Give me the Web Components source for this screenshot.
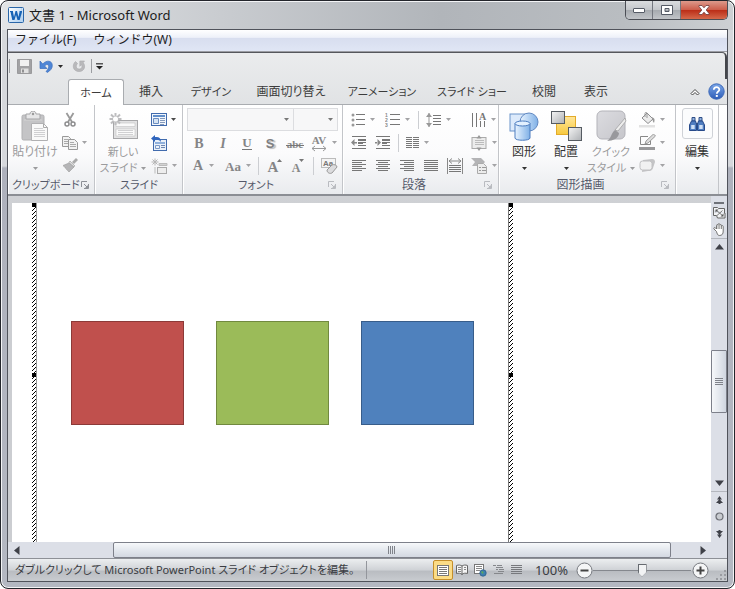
<!DOCTYPE html>
<html lang="ja">
<head>
<meta charset="utf-8">
<title>文書 1 - Microsoft Word</title>
<style>
html,body{margin:0;height:100%;background:#fff}
body{font:12px/16px "Noto Sans","Noto Sans CJK JP",sans-serif;font-feature-settings:"palt";color:#2b2b2b;overflow:hidden}
</style>
</head>
<body>
<app-window></app-window>
<script>
const RESET = `
:host,*{box-sizing:border-box}
button,select,input{font:inherit;color:inherit;font-feature-settings:inherit;margin:0;padding:0;border:0;background:none;border-radius:0}
button{display:flex;align-items:center;justify-content:center;white-space:nowrap}
svg{display:block;flex:none}
.kana{font-size:11px}
`;
function define(name, css, html) {
  const t = document.createElement('template');
  t.innerHTML = `<style>${RESET}${css}</style>${typeof html === 'string' ? html : ''}`;
  customElements.define(name, class extends HTMLElement {
    constructor() {
      super();
      this.attachShadow({ mode: 'open' }).append(t.content.cloneNode(true));
    }
    connectedCallback() {
      if (typeof html === 'function' && !this.ready) {
        this.ready = true;
        this.shadowRoot.innerHTML += html(this);
      }
    }
  });
}
const svg = (w, h, body) => `<svg width="${w}" height="${h}" viewBox="0 0 ${w} ${h}" fill="none" aria-hidden="true">${body}</svg>`;
const lines = (rows, color = '#777') => rows.map(([x, y, w]) => `<path d="M${x} ${y + .5}h${w}" stroke="${color}"/>`).join('');
const letter = (w, t, extra) => svg(w, 18, `<text x="${w / 2}" y="14" text-anchor="middle" font-family="Liberation Serif, serif" font-weight="bold" font-size="14" fill="#858587" ${extra || ''}>${t}</text>`);

const ICONS = {
  word: svg(16, 16, `<defs><linearGradient id="g" x1="0" y1="0" x2="1" y2="1"><stop stop-color="#fff"/><stop offset="1" stop-color="#a9cdf0"/></linearGradient></defs><rect x=".5" y=".5" width="15" height="15" rx="1" fill="url(#g)" stroke="#2a66a8"/><path d="M13.5 1v14" stroke="#bcd6ef"/><path d="M2 4h3v1l1 5 1.500-6h1.500l1.500 6 1-5V4h2.500v1l-2.300 8H9.500L8 8l-1.500 5H4.300L2.500 5H2z" fill="#1763b5"/>`),
  min: svg(12, 5, `<rect x=".5" y=".5" width="11" height="4" rx=".5" fill="#fff" stroke="#555b66"/>`),
  max: svg(12, 10, `<path d="M.5.5h11v9H.5zM4 3.500v3h4v-3z" fill="#fff" fill-rule="evenodd" stroke="#555b66"/>`),
  close: svg(12, 10, `<path d="M1 .5h3l2 2.300L8 .5h3v1L8.200 5 11 8.500v1H8L6 7.200 4 9.500H1v-1L3.800 5 1 1.500z" fill="#fff" stroke="#6b3a3a" stroke-width=".8"/>`),
  save: svg(15, 15, `<path d="M.5.5h14v14h-14z" fill="#a2a2a4" stroke="#9a9a9c"/><path d="M3 1h9v6H3z" fill="#f1f1f1"/><path d="M4 9.500h7.500V14H4z" fill="#e0e0e0"/><path d="M5 10.500h2v3H5z" fill="#909092"/>`),
  undo: svg(14, 14, `<path d="M1 2v7.500h7L5.600 7C7.600 4.600 9.700 5.400 9.700 7.500c0 2-1 3.300-2.700 4.900l1.400 1C11.500 11.500 13.300 9.500 13.300 6.500 13.300 1.500 7.500.6 3.800 5z" fill="#4f86d6" stroke="#3a6dbb" stroke-width=".7"/>`),
  redo: svg(14, 14, `<path d="M3.500 2.500C-.5 6 1 12.500 7 12.500c5.500 0 7-5.500 4.200-8.800L12.500 2H7.800v5.300L9.400 5.700c1.300 2.200.3 4.300-2.200 4.300C4.200 10 3.300 7 5.500 4.500z" fill="#b9b9bb" stroke="#aaaaac" stroke-width=".6"/>`),
  more: svg(7, 7, `<path d="M0 .8h7" stroke="#333" stroke-width="1.200"/><path d="M0 3h7L3.500 6.500z" fill="#222"/>`),
  caret: svg(5, 3, `<path d="M0 0h5L2.500 3z" fill="currentColor"/>`),
  chevron: svg(10, 8, `<path d="M1 5.500 5 1.500l4 4-1.500 1.500L5 4.500 2.500 7z" fill="#fff" stroke="#444" stroke-width="1"/>`),
  help: svg(17, 17, `<defs><linearGradient id="g" x1="0" y1="0" x2="0" y2="1"><stop stop-color="#7ba7e8"/><stop offset="1" stop-color="#2d5cb8"/></linearGradient></defs><circle cx="8.500" cy="8.500" r="7.700" fill="url(#g)" stroke="#3d69b8"/><path d="M5.800 6.800c0-3.600 5.700-3.400 5.500 0-.1 1.700-2.500 1.900-2.500 4" stroke="#fff" stroke-width="1.800"/><path d="M7.800 12h2v1.900h-2z" fill="#fff"/>`),
  launcher: svg(8, 8, `<path d="M.5 6V.5H6" stroke="currentColor"/><path d="M3 3l3 3M7.500 3v4.500H3" stroke="currentColor"/><path d="M7 4v3H4z" fill="currentColor"/>`),
  paste: svg(28, 31, `<rect x="1" y="4" width="22" height="25" rx="1.500" fill="#c4c4c6" stroke="#b0b0b2"/><path d="M3 9h18" stroke="#d4d4d4"/><path d="M5 3h4c0-4 6-4 6 0h4v5H5z" fill="#e6e6e7" stroke="#a5a5a7"/><circle cx="12" cy="3" r="1.200" fill="#999"/><path d="M10.500 12.500h12l4 4v13h-16z" fill="#f9f9f9" stroke="#b0b0b2"/><path d="M22.500 12.500v4h4" stroke="#aaa"/>${lines([[13, 17, 9], [13, 19, 11], [13, 21, 11], [13, 23, 11], [13, 25, 11]], '#cfcfd1')}`),
  cut: svg(12, 16, `<path d="M2.500 1 8 10M9.500 1 4 10" stroke="#999" stroke-width="1.800"/><circle cx="3" cy="12" r="2" stroke="#8c8c8e" stroke-width="1.500"/><circle cx="9" cy="12" r="2" stroke="#8c8c8e" stroke-width="1.500"/>`),
  copy: svg(16, 14, `<path d="M.5.500h6l2 2v8h-8z" fill="#f2f2f2" stroke="#999"/>${lines([[2, 3, 4], [2, 5, 4], [2, 7, 4]], '#aaa')}<path d="M6.500 3.500h6l3 3v7h-9z" fill="#f2f2f2" stroke="#999"/>${lines([[8, 6, 4], [8, 8, 6], [8, 10, 6]], '#aaa')}`),
  brush: svg(16, 15, `<path d="m14 0 2 2-4 4-2-2z" fill="#aaa"/><path d="m8 3 5 5-1.500 1L7 4.500z" fill="#ddd" stroke="#999" stroke-width=".6"/><path d="M7 5 1 7.500c1.500 1 1.500 2 3 3 .5 1.500 2 2 3 3.500L12 9z" fill="#b5b5b7" stroke="#999" stroke-width=".6"/>`),
  newslide: svg(31, 29, `<rect x="5.500" y="8.500" width="24" height="18" fill="#e2e2e3" stroke="#a6a6a8"/><path d="M8 11h19v3.500H8zM8 17h19v7H8z" fill="#fafafa" stroke="#c3c3c5" stroke-width=".6"/>${lines([[10, 18, 15], [10, 20, 15], [10, 22, 15]], '#d0d0d2')}<path d="M7.500 1v12M1.500 7h12M3 2.500l9 9M12 2.500l-9 9" stroke="#bdbdbf" stroke-width="2"/><circle cx="7.500" cy="7" r="2.500" fill="#fff"/>`),
  layout: svg(16, 13, `<rect x=".5" y=".5" width="15" height="12" fill="#f3f7fc" stroke="#416bad"/><path d="M2 2h12v2H2z" fill="#6390cb"/><path d="M2.500 5.500h5v5h-5z" fill="#d7e4f3" stroke="#6a8cc0"/>${lines([[9, 5, 5], [9, 7, 5], [9, 9, 5], [9, 11, 4]], '#8399bb')}`),
  reset: svg(17, 16, `<rect x="2.500" y="4.500" width="13" height="11" fill="#eaf1f9" stroke="#416bad"/><path d="M4 7h10v2H4z" fill="#8fb0dc"/><path d="M4.500 10.500h4v3h-4z" stroke="#7a98c6"/>${lines([[10, 10, 4], [10, 12, 4]], '#6e87b1')}<path d="M0 3.500 4 0v2c4-.5 6 1 6 5C8.500 5 7 4.500 4 5v2z" fill="#2f65bd"/>`),
  section: svg(17, 16, `<path d="M4 .5v7M.5 4h7M1.500 1.500l5 5M6.500 1.500l-5 5" stroke="#b5b5b5"/><path d="M8 5.500h8v2H8z" fill="#d2d2d2" stroke="#bbb"/><rect x="6.500" y="9.500" width="9" height="6" fill="#ededed" stroke="#aaa"/><path d="M4 9v6.500" stroke="#bbb"/>`),
  bold: letter(14, 'B'),
  italic: letter(14, 'I', 'font-style="italic"'),
  underline: svg(14, 18, `<text x="7" y="13" text-anchor="middle" font-family="Liberation Serif, serif" font-weight="bold" font-size="13" fill="#858587">U</text><path d="M2 15.500h10" stroke="#777"/>`),
  shadow: svg(16, 18, `<text x="7" y="14" text-anchor="middle" font-family="Liberation Sans, sans-serif" font-weight="bold" font-size="13" fill="#808082" style="text-shadow:2px 1px 1px #bbb">S</text>`),
  strike: svg(18, 18, `<text x="9" y="14" text-anchor="middle" font-family="Liberation Serif, serif" font-weight="bold" font-size="11" fill="#888">abc</text><path d="M0 11.500h18" stroke="#777"/>`),
  spacing: svg(17, 18, `<text x="8" y="10" text-anchor="middle" font-family="Liberation Serif, serif" font-weight="bold" font-size="11" fill="#888">AV</text><path d="M1 14.500h14M4 12l-3 2.500L4 17M12 12l3 2.500L12 17" stroke="#999"/>`),
  fontcolor: letter(14, 'A', 'dy="-1"'),
  case: svg(17, 18, `<text x="8" y="14" text-anchor="middle" font-family="Liberation Serif, serif" font-weight="bold" font-size="13" fill="#858587">Aa</text>`),
  grow: svg(16, 18, `<text x="7" y="15" text-anchor="middle" font-family="Liberation Serif, serif" font-weight="bold" font-size="15" fill="#858587">A</text><path d="M11 5h5l-2.500-3z" fill="#777"/>`),
  shrink: svg(14, 18, `<text x="5" y="15" text-anchor="middle" font-family="Liberation Serif, serif" font-weight="bold" font-size="12" fill="#888">A</text><path d="M8 2h5l-2.500 3z" fill="#777"/>`),
  clear: svg(17, 17, `<rect x=".5" y="1.500" width="14" height="9" fill="#f4f4f4" stroke="#bbb"/><text x="7" y="9" text-anchor="middle" font-family="Liberation Sans, sans-serif" font-weight="bold" font-size="8" fill="#777">Aa</text><path d="m6 13 5-5c2-1 5 0 5 2l-5 6c-2 1-5 0-5-3z" fill="#dcdcde" stroke="#999"/>`),
  bullets: svg(15, 14, `<g fill="#999"><circle cx="2" cy="2" r="1.500"/><circle cx="2" cy="7" r="1.500"/><circle cx="2" cy="12" r="1.500"/></g>${lines([[5, 1, 9], [5, 6, 9], [5, 11, 9]])}`),
  numbers: svg(16, 15, `<g font-family="Liberation Sans, sans-serif" font-weight="bold" font-size="5" fill="#888"><text y="5">1</text><text y="10">2</text><text y="15">3</text></g>${lines([[5, 2, 10], [5, 7, 10], [5, 12, 10]])}`),
  linespace: svg(16, 16, `<path d="M3 1v14" stroke="#999"/><path d="M0 5 3 1l3 4zM0 11l3 4 3-4z" fill="#999"/>${lines([[7, 3, 8], [7, 6, 8], [7, 9, 8], [7, 12, 8]])}`),
  textdir: svg(16, 16, `<path d="M1.500 1v14M5.500 1v14M9.500 9v6M13.500 9v6" stroke="#777"/><text x="11.500" y="8" text-anchor="middle" font-family="Liberation Serif, serif" font-weight="bold" font-size="10" fill="#777">A</text>`),
  outdent: svg(16, 14, `${lines([[1, 0, 14], [7, 3, 8], [7, 4, 8], [7, 6, 8], [7, 7, 5], [7, 9, 8], [1, 12, 14]])}<path d="M0 6.500 3.500 3v7zM3 6h3v1.500H3z" fill="#888"/>`),
  indent: svg(16, 14, `${lines([[1, 0, 14], [7, 3, 8], [7, 4, 8], [7, 6, 8], [7, 7, 5], [7, 9, 8], [1, 12, 14]])}<path d="M6 6.500 2.500 3v7zM0 6h3v1.500H0z" fill="#888"/>`),
  columns: svg(14, 11, lines([0, 2, 4, 6, 8, 10].flatMap(y => [[0, y, 6], [7, y, 6]]))),
  aligntext: svg(17, 16, `<rect x="1" y="2.500" width="14" height="11" fill="#ececec" stroke="#aaa"/>${lines([[4, 5, 9], [4, 7, 9], [4, 9, 9]], '#bbb')}<path d="M8 0 5.500 3.500h5zM8 16l-2.500-3.500h5z" fill="#999"/>`),
  left: svg(15, 12, lines([[0, 0, 14], [0, 2, 10], [0, 4, 14], [0, 6, 10], [0, 8, 14], [0, 10, 10]])),
  center: svg(15, 12, lines([[0, 0, 14], [2, 2, 10], [0, 4, 14], [2, 6, 10], [0, 8, 14], [2, 10, 10]])),
  right: svg(15, 12, lines([[0, 0, 14], [4, 2, 10], [0, 4, 14], [4, 6, 10], [0, 8, 14], [4, 10, 10]])),
  justify: svg(15, 12, lines([[0, 0, 14], [0, 2, 14], [0, 4, 14], [0, 6, 14], [0, 8, 14], [0, 10, 14]])),
  distribute: svg(16, 16, `<path d="M.5 0v16M15.500 0v16M2 3h12M5 .5 2 3l3 2.500M11 .5 14 3l-3 2.500" stroke="#888"/>${lines([[2, 7, 12], [2, 9, 12], [2, 11, 12], [2, 13, 12]])}`),
  smartart: svg(17, 17, `<path d="M0 1h10l4 4-4 4H1l3-4z" fill="#b3b3b5"/><path d="M6.500 6.500h6l3 3v7h-9z" fill="#ececec" stroke="#aaa"/>${lines([[8, 10, 2], [11, 10, 4], [8, 13, 2], [11, 13, 4]], '#999')}`),
  shapes: svg(30, 29, `<defs><linearGradient id="g"><stop stop-color="#e9f4ff"/><stop offset="1" stop-color="#7fb0e6"/></linearGradient></defs><rect x="1" y="2" width="18" height="17" fill="#dceafb" stroke="#6b93c9"/><circle cx="20" cy="10" r="9" fill="url(#g)" stroke="#6289c2"/><path d="M6 11.500V26c0 3 15 3 15 0V11.500" fill="url(#g)" stroke="#4c7cbf"/><ellipse cx="13.500" cy="11.500" rx="7.500" ry="2.500" fill="#e2f0ff" stroke="#4c7cbf"/>`),
  arrange: svg(31, 30, `<defs><linearGradient id="g" x1="0" y1="0" x2="1" y2="1"><stop stop-color="#f5f5f5"/><stop offset="1" stop-color="#adb0b4"/></linearGradient><linearGradient id="y" x1="0" y1="0" x2="0" y2="1"><stop stop-color="#ffe69a"/><stop offset="1" stop-color="#f7c93f"/></linearGradient></defs><rect x="5.500" y="5.500" width="19" height="18" fill="url(#y)" stroke="#e3ab2a"/><rect x=".5" y=".5" width="13" height="12" fill="url(#g)" stroke="#555b62"/><rect x="17.500" y="16.500" width="13" height="13" fill="url(#g)" stroke="#555b62"/>`),
  styles: svg(31, 32, `<defs><linearGradient id="g" x1="0" y1="0" x2="1" y2="1"><stop stop-color="#dcdce0"/><stop offset="1" stop-color="#c6c6cb"/></linearGradient></defs><rect x="1" y="1" width="28" height="28" rx="5" fill="url(#g)" stroke="#b3b3b9"/><path d="m30 11-8 10-3-1L29 8z" fill="#ededed" stroke="#999" stroke-width=".7"/><path d="m19 20 4 3c0 5-6 8-12 8 4-2 4-8 8-11z" fill="#98989c"/>`),
  fill: svg(17, 16, `<path d="m3 6 5-5 6 6-5 4.500z" fill="#ececec" stroke="#8c8c8e"/><path d="M6 5V1.500C6 0 8 0 8 1.500V6" stroke="#999"/><path d="M12.500 5C16 6 16 8 15 11c-2-2-1-4-2.500-6z" fill="#999"/><path d="M0 13h16v2.500H0z" fill="#e2e2e2"/>`),
  outline: svg(17, 17, `<path d="M9 2.500H1.500v8h10V7" stroke="#888"/><path d="m14.500 0 2 2L9 9l-3 1 1-3z" fill="#ddd" stroke="#888" stroke-width=".8"/><path d="M0 13h16v3H0z" fill="#99999b"/>`),
  effects: svg(17, 14, `<path d="m4 1 9-1c2 0 3 1 3 3l-2 6c-1 3-3 3-5 3L3 13z" fill="#c4c4c6"/><rect x="1" y="2" width="12" height="9" rx="2.500" fill="#f1f1f1" stroke="#c0c0c2"/>`),
  find: svg(16, 14, `<path d="M3 .5h3V4H3zM10 .5h3V4h-3z" fill="#8fb0de" stroke="#2f4f87"/><path d="M2.500 4h4l1 3v6.500H.500V8zM9.500 4h4l2 4v5.500h-7V7z" fill="#4f7dc0" stroke="#274a8a"/><path d="M2.200 8h3.500v4H2.200zM10.200 8h3.500v4h-3.500z" fill="#cfe0f6"/><path d="M7 6h2v3H7z" fill="#2f4f87"/>`),
  up: svg(9, 6, `<path d="M0 5.500h9L4.500 0z" fill="#3f4148"/>`),
  down: svg(9, 6, `<path d="M0 .5h9L4.500 6z" fill="#3f4148"/>`),
  prev: svg(6, 9, `<path d="M5.500 0v9L0 4.500z" fill="#3f4148"/>`),
  next: svg(6, 9, `<path d="M.5 0v9L6 4.500z" fill="#3f4148"/>`),
  fit: svg(13, 12, `<path d="M.5 5.500v-5h4l1 1h6v5M.5 3v5.500h3l1 2.500h7.500V6" fill="#f2f3f5" stroke="#666"/><path d="m3 3 7 6M9.500 3.500 4 8.500" stroke="#777"/><path d="M2.500 2.500h3l-3 3zM10.500 9.500h-3l3-3z" fill="#555"/>`),
  hand: svg(13, 13, `<path d="M3.500 8.500 1 6c-.8-1 .6-2 1.400-1.200L3.500 6V2.500c0-1.200 1.600-1.200 1.600 0v-1c0-1.200 1.700-1.200 1.700 0v1c0-1.200 1.700-1.200 1.700 0v1c0-1.200 1.700-1.200 1.700 0V8c0 3-1 4.500-4 4.500-1.500 0-2.200-2-2.700-4z" fill="#fff" stroke="#666" stroke-width=".9"/><path d="M5.100 3v3M6.800 3v3M8.500 3.500V6" stroke="#777" stroke-width=".8"/>`),
  pageup: svg(7, 8, `<path d="M1 3.500h5L3.500 0zM0 7h7L3.500 3z" fill="#3f4148"/><path d="M2.500 6h2v2h-2z" fill="#3f4148"/>`),
  pagedown: svg(7, 8, `<path d="M1 4.500h5L3.500 8zM0 1h7L3.500 5z" fill="#3f4148"/><path d="M2.500 0h2v2h-2z" fill="#3f4148"/>`),
  ball: svg(9, 9, `<circle cx="4.500" cy="4.500" r="3.500" fill="#c8cbd0" stroke="#6d6f76" stroke-width="1.200"/>`),
  vgrip: svg(8, 8, lines([[0, 0, 8], [0, 2, 8], [0, 4, 8], [0, 6, 8]], '#80838a')),
  hgrip: svg(8, 8, `<path d="M.5 0v8M2.500 0v8M4.500 0v8M6.500 0v8" stroke="#80838a"/>`),
  print: svg(12, 11, `<rect x=".5" y=".5" width="11" height="10" fill="#fff" stroke="#777"/>${lines([[2, 2, 8], [2, 4, 8], [2, 6, 8], [2, 8, 8]], '#777')}`),
  read: svg(12, 12, `<path d="M.5 1.500c2-.8 4-.5 5.500.5 1.500-1 3.500-1.300 5.500-.5v8c-2-.6-4-.4-5.500.8C4.500 9.100 2.500 8.900.500 9.500zM6 2v9" fill="#f5f5f5" stroke="#666"/>${lines([[2, 3, 3], [2, 5, 3], [2, 7, 3], [8, 3, 2], [8, 5, 2]], '#888')}`),
  web: svg(13, 13, `<rect x=".5" y=".5" width="9" height="9" fill="#fff" stroke="#777"/>${lines([[2, 2, 6], [2, 4, 6], [2, 6, 4]], '#888')}<circle cx="9" cy="9" r="3.200" fill="#3e7fae" stroke="#2d5f8c" stroke-width=".8"/><path d="M7 8c2-2 3 0 2 2z" fill="#5fae56"/>`),
  outlineview: svg(11, 10, lines([[0, 0, 3], [4, 0, 5], [3, 2, 7], [3, 4, 2], [6, 4, 5], [5, 6, 6], [1, 8, 9]], '#85878b')),
  draft: svg(11, 10, lines([[0, 0, 11], [0, 2, 11], [0, 4, 11], [0, 6, 11], [0, 8, 11]], '#77797d')),
  minus: svg(17, 17, `<circle cx="8.500" cy="8.500" r="7.500" fill="#f4f5f6" stroke="#777a80"/><path d="M4.500 8.500h8" stroke="#444" stroke-width="2"/>`),
  plus: svg(17, 17, `<circle cx="8.500" cy="8.500" r="7.500" fill="#f4f5f6" stroke="#777a80"/><path d="M4.500 8.500h8M8.500 4.500v8" stroke="#444" stroke-width="2"/>`),
  corner: svg(12, 12, `<g fill="#9a9ca1"><path d="M9 1h2v2H9zM5 5h2v2H5zM9 5h2v2H9zM1 9h2v2H1zM5 9h2v2H5zM9 9h2v2H9z"/></g>`)
};

define('ui-icon', `:host{display:block;flex:none}`, el => ICONS[el.getAttribute('name')]);

define('tool-button', `
:host{display:block;flex:none;width:24px;height:23px;color:#a3a3a5}
:host([wide]){width:34px}
:host([enabled]){color:#4a4a4a}
button{width:100%;height:100%;gap:4px}
:host([wide]) button{justify-content:flex-start;padding-left:4px}
`, el => `<button aria-label="${el.getAttribute('label')}"><ui-icon name="${el.getAttribute('icon')}"></ui-icon>${el.hasAttribute('wide') ? '<ui-icon name="caret"></ui-icon>' : ''}</button>`);

define('big-button', `
:host{display:block;flex:none;width:44px;color:#9b9b9d}
:host([enabled]){color:#333}
button{width:100%;flex-direction:column;justify-content:flex-start}
.pic{height:36px;display:flex;align-items:center}
:host([boxed]) .pic{height:31px;width:31px;justify-content:center;margin:0 0 5px;border:1px solid #cfd2d7;border-radius:3px;background:#fbfcfd}
.last{display:flex;align-items:center;justify-content:center;gap:4px;min-height:16px}
span{line-height:16px}
`, el => `<button><div class="pic"><ui-icon name="${el.getAttribute('icon')}"></ui-icon></div><span><slot></slot></span><div class="last"><slot name="second"></slot><ui-icon name="caret"></ui-icon></div></button>`);

define('ribbon-group', `
:host{display:grid;grid-template-rows:minmax(0,1fr) 18px;grid-template-columns:minmax(0,1fr);flex:none;border-right:1px solid #c3c5c9;box-shadow:inset 1px 0 #fff;padding:3px 3px 0 4px}
.body{display:flex}
.cap{display:flex;align-items:center;color:#55596a;line-height:16px;white-space:nowrap}
.cap span{flex:1;text-align:center}
.cap button{width:14px;height:14px;color:#8d9096}
:host([dim]) .cap button{color:#b9bbc0}
`, el => `<div class="body"><slot></slot></div><div class="cap"><span class="${el.hasAttribute('kana') ? 'kana' : ''}">${el.getAttribute('caption') || ''}</span>${el.hasAttribute('launch') ? '<button aria-label="詳細設定"><ui-icon name="launcher"></ui-icon></button>' : ''}</div>`);

define('title-bar', `
:host{display:flex;align-items:center;height:28px;padding:0 6px 0 1px;color:#1c1c1c}
h1{font:inherit;font-size:13px;margin:0 0 0 5px;flex:1}
.ctl{display:flex;align-self:flex-start;height:19px;border:1px solid #4b4e55;border-top:0;border-radius:0 0 5px 5px;overflow:hidden}
.ctl button{width:28px;border-right:1px solid #74777f;background:linear-gradient(#dadcdf,#c3c6ca 50%,#a6aaaf 50%,#c1c4c8)}
.ctl button:first-child{width:27px}
.ctl button:last-child{width:46px;border:0;background:linear-gradient(#dd9a8c,#cc5c49 50%,#ba2c16 50%,#d5694b)}
.ctl{margin-right:-6px}
`, `<ui-icon name="word"></ui-icon><h1>文書 1 - Microsoft Word</h1>
<div class="ctl"><button aria-label="最小化"><ui-icon name="min"></ui-icon></button><button aria-label="最大化"><ui-icon name="max"></ui-icon></button><button aria-label="閉じる"><ui-icon name="close"></ui-icon></button></div>`);

define('menu-bar', `
:host{display:flex;height:22px;padding:0 7px;gap:17px;color:#1d1d1d;font-feature-settings:normal;background:linear-gradient(#fff,#eef1f9 35%,#d8deef 40%,#e0e6f5);border-bottom:1px solid #9b9da3}
button{height:20px}
`, `<button>ファイル(F)</button><button>ウィンドウ(W)</button>`);

define('quick-bar', `
:host{display:flex;align-items:center;height:27px;padding:0 1px;border-top:1px solid #55575c;border-right:2px solid #44464b;border-radius:0 5px 0 0}
i{width:1px;height:14px;background:#9b9da1}
button{height:20px}
.save{width:28px}.undo{width:15px}.drop{width:14px}.redo{width:24px}.more{width:14px}
`, `<i></i><button class="save" aria-label="上書き保存"><ui-icon name="save"></ui-icon></button><button class="undo" aria-label="元に戻す"><ui-icon name="undo"></ui-icon></button><button class="drop" aria-label="元に戻す一覧"><ui-icon name="caret"></ui-icon></button><button class="redo" aria-label="やり直し"><ui-icon name="redo"></ui-icon></button><i></i><button class="more" aria-label="カスタマイズ"><ui-icon name="more"></ui-icon></button>`);

define('tab-strip', `
:host{display:flex;align-items:flex-end;height:26px;padding-left:60px;border-bottom:1px solid #a9acb0;color:#3c3c3c}
nav{display:grid;grid-template-columns:56px 54px 66px 94px 88px 92px 52px 52px;flex:1}
button{height:25px}
.on{height:26px;margin-bottom:-1px;background:#fff;border:1px solid #a9acb0;border-bottom:0;border-radius:3px 3px 0 0}
.fold{width:20px}.help{width:22px}
`, `<nav><button class="on kana">ホーム</button><button>挿入</button><button class="kana">デザイン</button><button>画面切り替え</button><button class="kana">アニメーション</button><button class="kana">スライド ショー</button><button>校閲</button><button>表示</button></nav><button class="fold" aria-label="リボンの最小化"><ui-icon name="chevron"></ui-icon></button><button class="help" aria-label="ヘルプ"><ui-icon name="help"></ui-icon></button>`);

const tb = (icon, label, attrs = '') => `<tool-button icon="${icon}" label="${label}" ${attrs}></tool-button>`;
define('ribbon-bar', `
:host{display:flex;height:91px;background:linear-gradient(#fff,#fbfbfc 55%,#e9ebee);border-bottom:2px solid #8b8e94}
.col{display:flex;flex-direction:column}
.rows{display:flex;flex-direction:column;flex:1}
.row{display:flex;align-items:center;height:23px}
.push{margin-left:auto;margin-right:-2px}
i{width:1px;height:18px;margin:0 3px;background:#ccced2}
select{appearance:none;height:23px;border:1px solid #dcdde0;background:#f7f7f8}
.combo{display:grid;align-items:center;color:#777}
.combo>*{grid-area:1/1}
.combo ui-icon{justify-self:end;margin-right:5px;pointer-events:none}
.name{width:107px}.size{width:44px}.size select{border-left:0}
.clip{width:87px}.slide{width:88px}.font{width:160px}.para{width:156px}.draw{width:177px}.edit{width:43px}
.edit{padding-left:0;padding-right:0}
.s42{width:42px}.s46{width:46px}.s48{width:48px}
`, `
<ribbon-group class="clip" caption="クリップボード" kana launch>
<big-button icon="paste" class="s46">貼り付け</big-button>
<div class="col">${tb('cut', '切り取り')}${tb('copy', 'コピー', 'wide')}${tb('brush', '書式のコピー')}</div></ribbon-group>
<ribbon-group class="slide" caption="スライド" kana>
<big-button icon="newslide" class="s48 kana">新しい<span slot="second">スライド</span></big-button>
<div class="col">${tb('layout', 'レイアウト', 'wide enabled')}${tb('reset', 'リセット')}${tb('section', 'セクション', 'wide')}</div></ribbon-group>
<ribbon-group class="font" caption="フォント" kana launch dim><div class="rows">
<div class="row"><div class="combo name"><select aria-label="フォント名"><option></option></select><ui-icon name="caret"></ui-icon></div><div class="combo size"><select aria-label="サイズ"><option></option></select><ui-icon name="caret"></ui-icon></div></div>
<div class="row">${tb('bold', '太字')}${tb('italic', '斜体')}${tb('underline', '下線')}${tb('shadow', '影')}${tb('strike', '取り消し線')}${tb('spacing', '文字の間隔', 'wide')}</div>
<div class="row">${tb('fontcolor', 'フォントの色', 'wide')}${tb('case', '文字種の変換', 'wide')}<i></i>${tb('grow', '拡大')}${tb('shrink', '縮小')}<i></i>${tb('clear', '書式のクリア')}</div></div></ribbon-group>
<ribbon-group class="para" caption="段落" launch dim><div class="rows">
<div class="row">${tb('bullets', '箇条書き', 'wide')}${tb('numbers', '段落番号', 'wide')}<i></i>${tb('linespace', '行間', 'wide')}${tb('textdir', '文字列の方向', 'wide class="push"')}</div>
<div class="row">${tb('outdent', 'インデント解除')}${tb('indent', 'インデント')}<i></i>${tb('columns', '段組み', 'wide')}${tb('aligntext', '文字の配置', 'wide class="push"')}</div>
<div class="row">${tb('left', '左揃え')}${tb('center', '中央揃え')}${tb('right', '右揃え')}${tb('justify', '両端揃え')}${tb('distribute', '均等割り付け')}${tb('smartart', 'SmartArt に変換', 'wide class="push"')}</div></div></ribbon-group>
<ribbon-group class="draw" caption="図形描画" launch dim>
<big-button icon="shapes" class="s42" enabled>図形</big-button><big-button icon="arrange" class="s42" enabled>配置</big-button><big-button icon="styles" class="s48 kana">クイック<span slot="second">スタイル</span></big-button>
<div class="col">${tb('fill', '塗りつぶし', 'wide')}${tb('outline', '枠線', 'wide')}${tb('effects', '効果', 'wide')}</div></ribbon-group>
<ribbon-group class="edit"><big-button icon="find" class="s42" enabled boxed>編集</big-button></ribbon-group>`);

define('shape-box', `:host{display:block;width:113px;height:104px;background:var(--fill);border:1px solid var(--line)}`, '');

define('hatch-edge', `:host{display:block;position:relative}svg{width:100%;height:100%}
b{position:absolute;left:0;top:0;width:4px;height:4px;background:#000}b+b{top:50%}`,
`<svg aria-hidden="true" shape-rendering="crispEdges"><defs><pattern id="h" width="4" height="4" patternUnits="userSpaceOnUse"><path d="M0 0h4v4H0z" fill="#fff"/><path d="M3 0h1v1H3zM2 1h1v1H2zM1 2h1v1H1zM0 3h1v1H0z" fill="#000"/></pattern></defs><rect width="100%" height="100%" fill="url(#h)"/></svg><b></b><b></b>`);

define('slide-object', `
:host{display:flex;justify-content:space-between;width:481px;margin-left:20px}
.shapes{display:flex;align-items:center;gap:32px}
hatch-edge{width:5px}
.l{border-right:1px solid #999}
.r{border-left:1px solid #777}
`, `<hatch-edge class="l"></hatch-edge><div class="shapes"><slot></slot></div><hatch-edge class="r"></hatch-edge>`);

define('vertical-scroll', `
:host{display:flex;flex-direction:column;width:16px;background:#dcdfe7}
button{width:100%;height:17px;flex:none}
.split{height:8px;width:10px;align-self:center;border-bottom:2px solid #6f7279}
.line{border-top:1px solid #b4b7be}
.track{display:grid;grid-template-rows:94fr 63fr 60fr;flex:1}
.thumb{grid-row:2;display:flex;align-items:center;justify-content:center;border:1px solid #7d808a;border-radius:1px;background:linear-gradient(90deg,#f6f8fa,#e4e8ee 50%,#cfd5df)}
.foot{height:16px}
`, `<div class="split"></div><button aria-label="ウィンドウに合わせる"><ui-icon name="fit"></ui-icon></button><button aria-label="手のひら"><ui-icon name="hand"></ui-icon></button><button class="line" aria-label="上へ"><ui-icon name="up"></ui-icon></button><div class="track"><div class="thumb"><ui-icon name="vgrip"></ui-icon></div></div><button aria-label="下へ"><ui-icon name="down"></ui-icon></button><button class="line" aria-label="前のページ"><ui-icon name="pageup"></ui-icon></button><button aria-label="対象の選択"><ui-icon name="ball"></ui-icon></button><button aria-label="次のページ"><ui-icon name="pagedown"></ui-icon></button><div class="foot"></div>`);

define('horizontal-scroll', `
:host{display:flex;height:16px;background:#dcdfe7}
button{width:17px}
.track{display:grid;grid-template-columns:88fr 558fr 23fr;flex:1}
.thumb{grid-column:2;display:flex;align-items:center;justify-content:center;border:1px solid #7d808a;border-radius:2px;background:linear-gradient(#f6f8fa,#e4e8ee 50%,#d3d8e1)}
`, `<button aria-label="左へ"><ui-icon name="prev"></ui-icon></button><div class="track"><div class="thumb"><ui-icon name="hgrip"></ui-icon></div></div><button aria-label="右へ"><ui-icon name="next"></ui-icon></button>`);

define('document-area', `
:host{display:grid;grid-template-columns:1fr 16px;flex:1;min-height:0}
.left{display:grid;grid-template-rows:1fr 16px;min-width:0}
.page{display:flex;margin:7px 0 0 4px;background:#fff;overflow:hidden}
`, `<div class="left"><div class="page"><slide-object>
<shape-box style="--fill:#c0504d;--line:#8c3a38"></shape-box><shape-box style="--fill:#9bbb59;--line:#71893f"></shape-box><shape-box style="--fill:#4f81bd;--line:#385d8a"></shape-box></slide-object></div><horizontal-scroll></horizontal-scroll></div><vertical-scroll></vertical-scroll>`);

define('status-bar', `
:host{display:flex;align-items:center;height:23px;border-top:1px solid #8d9096;padding-left:7px;color:#3a3c42;background:linear-gradient(#eceef0,#cfd2d6 50%,#b9bcc1 55%,#c9ccd0)}
p{margin:0;width:351px;white-space:nowrap;font-size:11px}
i{width:1px;height:18px;background:#93969c}
.views{display:flex;margin-left:auto}
.views button{width:18px;height:20px}
.views .on{width:20px;background:#fbdc86;border:1px solid #c58f2b;border-radius:2px}
.pct{width:43px;justify-content:flex-end;margin-right:7px;font-size:13px}
.out{width:18px}
input{appearance:none;width:98px;height:17px;background:linear-gradient(#85888e,#85888e) center/100% 1px no-repeat}
input::-webkit-slider-thumb{appearance:none;width:9px;height:13px;background:#6b6e75;clip-path:polygon(0 0,100% 0,100% 65%,50% 100%,0 65%);box-shadow:inset 0 0 0 1px #666a70,inset 0 0 0 9px #f2f3f4}
.grip{align-self:flex-end;margin-left:6px}
`, `<p>ダブルクリックして Microsoft PowerPoint スライド オブジェクトを編集。</p><i></i>
<div class="views"><button class="on" aria-label="印刷レイアウト"><ui-icon name="print"></ui-icon></button><button aria-label="全画面閲覧"><ui-icon name="read"></ui-icon></button><button aria-label="Web レイアウト"><ui-icon name="web"></ui-icon></button><button aria-label="アウトライン"><ui-icon name="outlineview"></ui-icon></button><button aria-label="下書き"><ui-icon name="draft"></ui-icon></button></div>
<button class="pct">100%</button><button class="out" aria-label="縮小"><ui-icon name="minus"></ui-icon></button><input type="range" aria-label="ズーム" min="0" max="200" value="100"><button class="out" aria-label="拡大"><ui-icon name="plus"></ui-icon></button><ui-icon class="grip" name="corner"></ui-icon>`);

define('app-window', `
:host{display:flex;flex-direction:column;height:100vh;border:1px solid #23252b;border-radius:8px;padding:0 6px 6px;
background:linear-gradient(90deg,#e3e5e7,#c9ccd0 30%,#b1b5ba 60%,#b9bdc1 85%,#cdd0d3) top/100% 29px no-repeat,linear-gradient(#d6d8dc 165px,#aeb1bc 167px,#b4b8c2);box-shadow:inset 0 0 0 1px #f3f4f6}
main{display:flex;flex-direction:column;flex:1;min-height:0;border:1px solid #50535b;background:linear-gradient(#eff0f1,#e0e2e4 78px,#cbcdd1 190px)}
`, `<title-bar></title-bar><main><menu-bar></menu-bar><quick-bar></quick-bar><tab-strip></tab-strip><ribbon-bar></ribbon-bar><document-area></document-area><status-bar></status-bar></main>`);
</script>
</body>
</html>
